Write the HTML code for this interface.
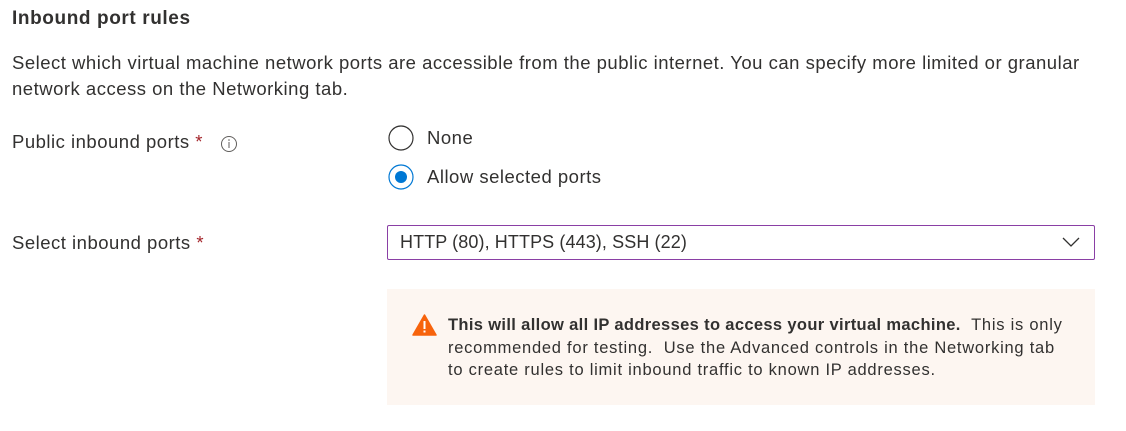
<!DOCTYPE html>
<html><head><style>
body{margin:0;width:1126px;height:431px;background:#fff;font-family:"Liberation Sans",sans-serif;color:#323130;position:relative;overflow:hidden}
.a{position:absolute;white-space:nowrap}
.t{font-size:18.5px;line-height:26px;letter-spacing:0.5px}
.req{color:#a4262c}
</style></head><body>
<div class="a" style="left:12px;top:8px;font-size:19px;letter-spacing:0.6px;font-weight:bold;color:#323130">Inbound port rules</div>
<div class="a t" style="left:12px;top:50px">Select which virtual machine network ports are accessible from the public internet. You can specify more limited or granular</div>
<div class="a t" style="left:12px;top:76px">network access on the Networking tab.</div>
<div class="a t" style="left:12px;top:129px">Public inbound ports <span class="req">*</span></div>
<svg class="a" style="left:219px;top:135px" width="20" height="20"><circle cx="10" cy="9" r="7.5" fill="none" stroke="#605e5c" stroke-width="1"/><line x1="10" y1="7" x2="10" y2="13" stroke="#605e5c"/><circle cx="10" cy="5" r="0.8" fill="#605e5c"/></svg>
<svg class="a" style="left:388px;top:125px" width="28" height="66"><circle cx="13" cy="13" r="12" fill="#fff" stroke="#323130" stroke-width="1.2"/><circle cx="13" cy="52" r="12" fill="#fff" stroke="#0078d4" stroke-width="1.2"/><circle cx="13" cy="52" r="6" fill="#0078d4"/></svg>
<div class="a t" style="left:427px;top:125px">None</div>
<div class="a t" style="left:427px;top:164px">Allow selected ports</div>
<div class="a t" style="left:12px;top:230px">Select inbound ports <span class="req">*</span></div>
<div class="a" style="left:387px;top:225px;width:706px;height:33px;border:1px solid #8a3fa5;border-radius:2px"></div>
<div class="a" style="left:400px;top:229px;font-size:18px;line-height:26px;letter-spacing:0.1px">HTTP (80), HTTPS (443), SSH (22)</div>
<svg class="a" style="left:1061px;top:235px" width="20" height="14"><polyline points="2,3 10,11 18,3" fill="none" stroke="#323130" stroke-width="1.3"/></svg>
<div class="a" style="left:387px;top:289px;width:708px;height:116px;background:#fdf6f1"></div>
<svg class="a" style="left:412px;top:314px" width="26" height="22"><path d="M12.5 1 L24 21 H1 Z" fill="#f7630c" stroke="#f7630c" stroke-linejoin="round" stroke-width="1.5"/><rect x="11.5" y="7" width="2" height="8" fill="#fff"/><rect x="11.5" y="16.5" width="2" height="2" fill="#fff"/></svg>
<div class="a" style="left:448px;top:314px;font-size:16.5px;letter-spacing:0.75px;line-height:22.5px;color:#323130"><b style="letter-spacing:0.35px">This will allow all IP addresses to access your virtual machine.</b>&nbsp; This is only<br>recommended for testing.&nbsp; Use the Advanced controls in the Networking tab<br>to create rules to limit inbound traffic to known IP addresses.</div>
</body></html>
